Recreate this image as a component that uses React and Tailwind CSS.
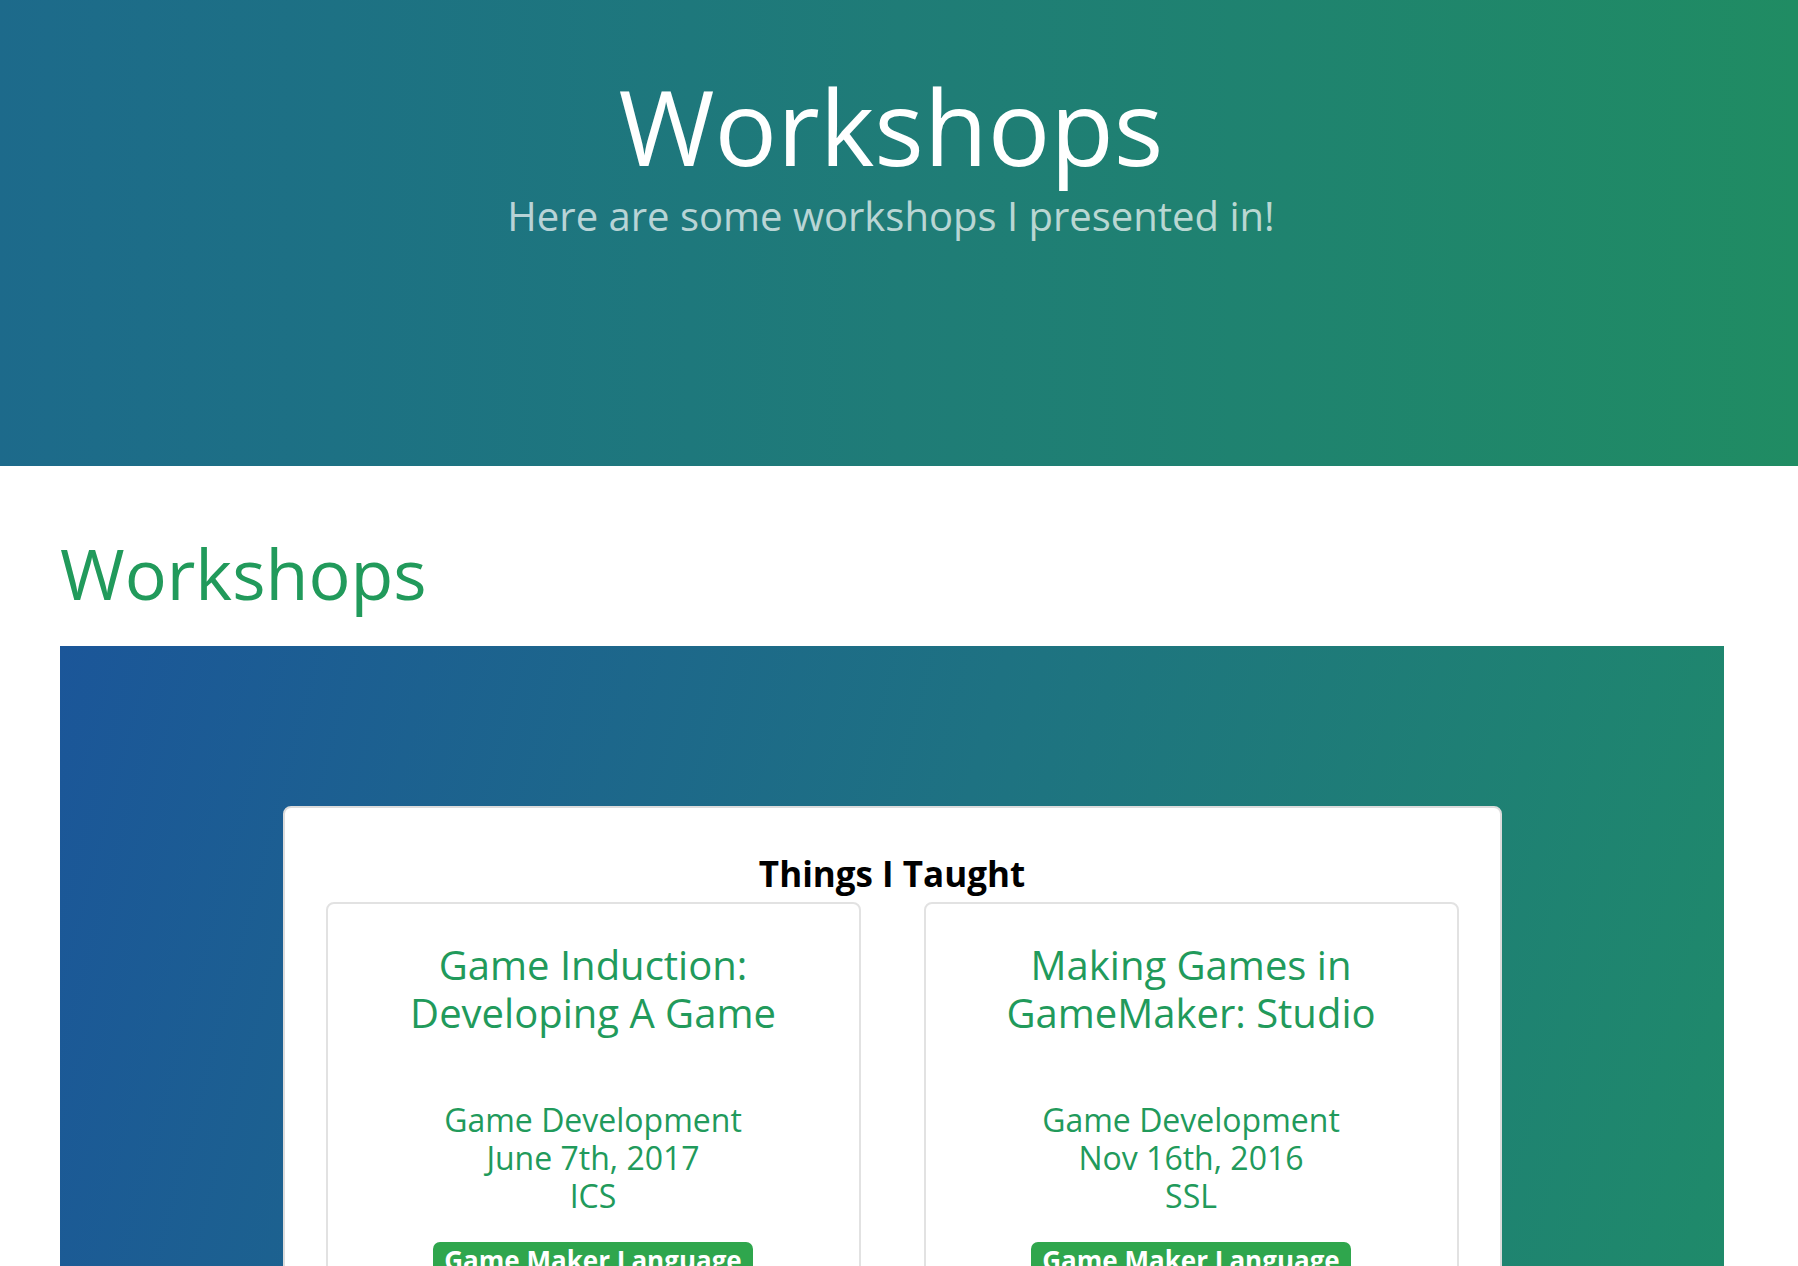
import React from "react";

const font = { fontFamily: '"Open Sans", "Noto Sans", sans-serif' };

function Workshop({ title, area, date, place, tag }) {
  return (
    <div className="rounded-[8px] border-2 border-[#e2e2e2] bg-white px-[38px] pt-[37px] pb-[40px] text-center">
      <h3 className="text-[40px] leading-[48px] font-normal text-[#219a5b]">{title}</h3>
      <div className="mt-[64px] text-[32px] leading-[38px] text-[#219a5b]">
        <div>{area}</div>
        <div>{date}</div>
        <div>{place}</div>
      </div>
      <div className="mt-[27px]">
        <span className="inline-block rounded-[7px] bg-[#2fa64d] px-[11px] pt-[5px] pb-[6px] text-[26px] font-bold leading-none text-white">
          {tag}
        </span>
      </div>
    </div>
  );
}

export default function App() {
  return (
    <div style={font} className="min-h-screen bg-white">
      <header className="h-[466px] bg-gradient-to-r from-[#1d6a8b] via-[#1f7c77] to-[#208c63] pt-[74px] pr-[16px] text-center">
        <h1 className="text-[104px] leading-[104px] font-normal text-white">Workshops</h1>
        <p className="mt-[8px] text-[40px] leading-[60px] text-white/70">
          Here are some workshops I presented in!
        </p>
      </header>

      <section className="pl-[60px] pr-[74px]">
        <h2 className="mt-[65px] text-[70px] leading-[84px] font-normal text-[#219a5b]">Workshops</h2>
        <div className="mt-[31px] bg-[linear-gradient(105deg,#1b5699_0%,#1e7282_50%,#1f8c68_100%)] pt-[160px] pb-[160px]">
          <div className="mx-auto w-[1219px] rounded-[8px] border-2 border-[#dcdcdc] bg-white px-[41px] pt-[44px] pb-[41px]">
            <h5 className="text-center text-[35px] leading-[43px] font-bold text-black">Things I Taught</h5>
            <div className="mt-[7px] grid grid-cols-2 gap-[63px]">
              <Workshop
                title={<>Game Induction:<br />Developing A Game</>}
                area="Game Development"
                date="June 7th, 2017"
                place="ICS"
                tag="Game Maker Language"
              />
              <Workshop
                title={<>Making Games in<br />GameMaker: Studio</>}
                area="Game Development"
                date="Nov 16th, 2016"
                place="SSL"
                tag="Game Maker Language"
              />
            </div>
          </div>
        </div>
      </section>
    </div>
  );
}
